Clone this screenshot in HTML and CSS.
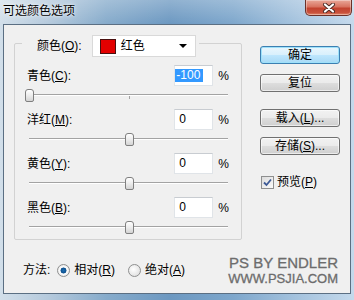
FILE: index.html
```html
<!DOCTYPE html>
<html lang="zh-CN">
<head>
    <meta charset="UTF-8">
    <meta name="viewport" content="width=device-width, initial-scale=1.0">
    <title>可选颜色选项</title>
    <link rel="stylesheet" href="styles.css">
</head>
<body>

    <div class="window">
        <div class="titlebar">
            <span class="title">可选颜色选项</span>
            <div class="close-btn">
                <svg width="14" height="10" viewBox="0 0 14 10"><path d="M3 1.5 L11 8.5 M11 1.5 L3 8.5" stroke="#4a2a24" stroke-width="4" stroke-linecap="round"/><path d="M3 1.5 L11 8.5 M11 1.5 L3 8.5" stroke="#fff" stroke-width="2.2" stroke-linecap="round"/></svg>
            </div>
        </div>

        <div class="client">
            <div class="main-row">
                <div class="group">
                    <div class="legend">
                        <span class="legend-label">颜色(<u>O</u>):</span>
                        <div class="dropdown">
                            <span class="swatch"></span>
                            <span class="dd-text">红色</span>
                            <span class="dd-arrow"></span>
                        </div>
                    </div>

                    <div class="slider-row">
                        <div class="field">
                            <span class="field-label">青色(<u>C</u>):</span>
                            <div class="num-input"><span class="selected">-100</span></div>
                            <span class="pct">%</span>
                        </div>
                        <div class="slider"><div class="track"></div><div class="tick"></div><div class="thumb" style="left: 0%"></div></div>
                    </div>

                    <div class="slider-row">
                        <div class="field">
                            <span class="field-label">洋红(<u>M</u>):</span>
                            <div class="num-input">0</div>
                            <span class="pct">%</span>
                        </div>
                        <div class="slider"><div class="track"></div><div class="tick"></div><div class="thumb" style="left: 50%"></div></div>
                    </div>

                    <div class="slider-row">
                        <div class="field">
                            <span class="field-label">黄色(<u>Y</u>):</span>
                            <div class="num-input">0</div>
                            <span class="pct">%</span>
                        </div>
                        <div class="slider"><div class="track"></div><div class="tick"></div><div class="thumb" style="left: 50%"></div></div>
                    </div>

                    <div class="slider-row">
                        <div class="field">
                            <span class="field-label">黑色(<u>B</u>):</span>
                            <div class="num-input">0</div>
                            <span class="pct">%</span>
                        </div>
                        <div class="slider"><div class="track"></div><div class="tick"></div><div class="thumb" style="left: 50%"></div></div>
                    </div>
                </div>

                <div class="buttons">
                    <button class="btn btn-default">确定</button>
                    <button class="btn">复位</button>
                    <button class="btn btn-gap">载入(<u>L</u>)...</button>
                    <button class="btn">存储(<u>S</u>)...</button>
                    <div class="check">
                        <span class="checkbox"><svg width="9" height="9" viewBox="0 0 9 9"><path d="M1 4.5 L3.5 7 L8 1.5" fill="none" stroke="#3d5a96" stroke-width="1.8"/></svg></span>
                        <span>预览(<u>P</u>)</span>
                    </div>
                </div>
            </div>

            <div class="bottom-row">
                <span class="method-label">方法:</span>
                <span class="radio checked"></span>
                <span class="radio-text">相对(<u>R</u>)</span>
                <span class="radio"></span>
                <span class="radio-text">绝对(<u>A</u>)</span>
                <div class="watermark">
                    <div class="wm1">PS BY ENDLER</div>
                    <div class="wm2">WWW.PSJIA.COM</div>
                </div>
            </div>
        </div>
    </div>

</body>
</html>
```

FILE: styles.css
```css
body { margin: 0; font-family: "Liberation Sans", "Noto Sans CJK SC", sans-serif; font-size: 12px; line-height: 16px; color: #000; }
u { text-decoration: underline; text-underline-offset: 1px; }

.window { width: 354px; height: 300px; display: flex; flex-direction: column; background: linear-gradient(90deg, #d2dfea 0%, #b4c9dc 14%, #86abcb 30%, #6c98c1 48%, #7ea7cc 66%, #a5c3de 84%, #c4d9ec 100%); }

/* title bar */
.titlebar { height: 24px; display: flex; align-items: flex-start; background: linear-gradient(180deg, rgba(255,255,255,0.25), rgba(255,255,255,0)); }
.title { margin: 3px 0 0 3px; text-shadow: 0 0 5px rgba(255,255,255,0.9), 0 0 2px rgba(255,255,255,0.8); }
.close-btn { margin-left: auto; margin-right: 2px; width: 45px; height: 15px; border: 1px solid #6b3129; border-top: none; border-radius: 0 0 5px 5px; background: linear-gradient(180deg, #e9a899 0%, #d87360 45%, #c2432f 55%, #c9523c 85%, #e48d6e 100%); box-shadow: inset 0 0 0 1px rgba(255,255,255,0.35); display: flex; align-items: center; justify-content: center; }
.close-btn svg { display: block; }

/* client area */
.client { height: 270px; margin: 0 3px 0 3px; box-sizing: border-box; border: 1px solid #5b6f83; background: #f0f0f0; padding: 18px 0 0 10px; display: flex; flex-direction: column; }
.main-row { display: flex; align-items: flex-start; }

.group { width: 228px; height: 197px; box-sizing: border-box; border: 1px solid #d2d2d2; border-radius: 2px; padding: 0 0 6px 0; }
.legend { display: flex; align-items: center; width: fit-content; margin: -9px 0 0 7px; padding: 0 3px 0 15px; background: #f0f0f0; }
.dropdown { width: 104px; height: 22px; box-sizing: border-box; margin-left: 10px; border: 1px solid #d9d9d9; background: #fff; display: flex; align-items: center; padding-left: 7px; }
.swatch { width: 14px; height: 13px; border: 1px solid #4a1010; background: #e30000; }
.dd-text { margin-left: 5px; }
.dd-arrow { margin-left: auto; margin-right: 8px; width: 0; height: 0; border-left: 4px solid transparent; border-right: 4px solid transparent; border-top: 4px solid #000; }

.slider-row { margin-top: 8px; }
.field { display: flex; align-items: center; height: 21px; padding: 0 12px 0 12px; }
.field-label { flex: 1; }
.num-input { width: 39px; height: 21px; box-sizing: border-box; border: 1px solid #e0e4e8; border-top-color: #c8ccd1; background: #fff; padding-left: 4px; line-height: 19px; }
.selected { display: inline-block; margin-left: -4px; padding: 0 3px 0 1px; background: #3399ff; color: #fff; line-height: 13px; vertical-align: middle; }
.pct { margin-left: 5px; }

.slider { position: relative; height: 12px; margin: 3px 13px 0 14px; }
.track { position: absolute; left: 0; right: 0; top: 5px; height: 1px; background: #a3a3a3; border-bottom: 1px solid #ffffff; }
.tick { position: absolute; left: 50%; top: 7px; width: 1px; height: 3px; background: #a3a3a3; }
.thumb { position: absolute; top: 0; width: 7px; height: 11px; margin-left: -4px; border: 1px solid #7f7f7f; border-radius: 3px 3px 2px 2px; background: linear-gradient(180deg, #ffffff 0%, #ececec 50%, #d4d4d4 100%); }

/* buttons column */
.buttons { margin: 3px 0 0 18px; display: flex; flex-direction: column; }
.btn { width: 80px; height: 18px; padding: 0; margin-bottom: 10px; font: inherit; color: #000; border: 1px solid #707070; border-radius: 3px; background: linear-gradient(180deg, #f2f2f2 0%, #ebebeb 48%, #dddddd 52%, #cfcfcf 100%); box-shadow: inset 0 0 0 1px rgba(255,255,255,0.6); line-height: 15px; }
.btn-default { border-color: #3c7fb1; background: linear-gradient(180deg, #eaf6fd 0%, #d9f0fc 48%, #bee6fd 52%, #a7d9f5 100%); box-shadow: inset 0 0 0 1px #9ee1fa; }
.btn-gap { margin-top: 7px; }
.check { display: flex; align-items: center; margin-top: 9px; margin-left: 1px; }
.checkbox { width: 11px; height: 11px; border: 1px solid #8e8f8f; background: linear-gradient(135deg, #dcdcdc, #fbfbfb); display: flex; align-items: center; justify-content: center; margin-right: 3px; }
.checkbox svg { display: block; }

/* bottom row */
.bottom-row { display: flex; align-items: center; margin-top: 14px; padding: 0 12px 0 9px; }
.method-label { margin-right: 7px; }
.radio { width: 11px; height: 11px; border: 1px solid #8e8f8f; border-radius: 50%; background: radial-gradient(circle at 40% 40%, #ffffff 0%, #e4e4e4 70%, #cfcfcf 100%); margin-right: 4px; }
.radio.checked { background: radial-gradient(circle at 50% 50%, #1e6fb4 0%, #0d4f8c 35%, #ffffff 42%, #e6e6e6 80%, #d0d0d0 100%); }
.radio-text { margin-right: 13px; }
.watermark { margin-left: auto; text-align: right; color: #6c6c6c; -webkit-text-stroke: 0.3px #6c6c6c; }
.wm1 { font-size: 15px; line-height: 17px; }
.wm2 { font-size: 13px; line-height: 15px; }
```
